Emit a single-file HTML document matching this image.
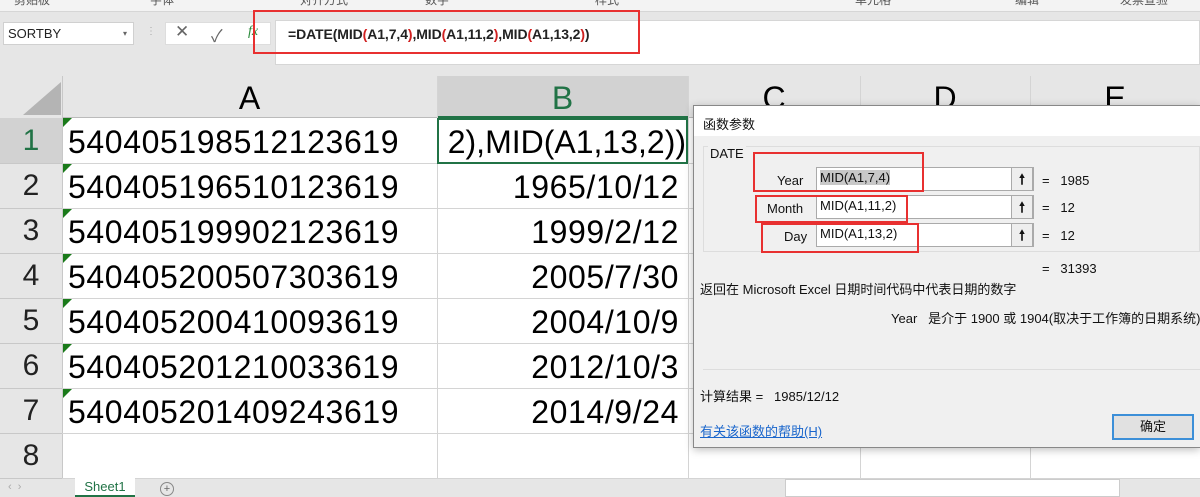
<!DOCTYPE html>
<html><head><meta charset="utf-8"><style>
*{margin:0;padding:0;box-sizing:border-box}
body{width:1200px;height:497px;overflow:hidden;background:#e6e6e6;position:relative;font-family:"Liberation Sans","Noto Sans CJK SC",sans-serif}
.a{position:absolute}
.cell{position:absolute;font-size:32px;color:#000;line-height:45px;white-space:nowrap;letter-spacing:0.6px}
.rh{position:absolute;left:0;width:62px;text-align:center;font-size:30px;color:#222;line-height:45px;border-bottom:1px solid #c8c8c8}
.hl{position:absolute;left:62px;width:1138px;height:1px;background:#d4d4d4}
.tri{position:absolute;width:0;height:0;border-top:9px solid #1a7a1a;border-right:9px solid transparent}
.dlg{font-size:13px;color:#111}
.inp{position:absolute;background:#fff;border:1px solid #aaa;height:24px;font-size:13px;line-height:20px;padding-left:3px}
.btn{position:absolute;right:0;top:-1px;width:22px;height:24px;border:1px solid #aaa;background:#eee;text-align:center;font-size:14px;line-height:22px;font-weight:bold}
.red{position:absolute;border:2px solid #e83030}
</style></head><body>
<div class="a" style="left:0;top:0;width:1200px;height:12px;background:#f3f3f3;border-bottom:1px solid #d6d6d6;font-size:12px;color:#555;line-height:4px;overflow:hidden">
<span class="a" style="left:14px;top:-2px">剪贴板</span><span class="a" style="left:150px;top:-2px">字体</span><span class="a" style="left:300px;top:-2px">对齐方式</span><span class="a" style="left:425px;top:-2px">数字</span><span class="a" style="left:595px;top:-2px">样式</span><span class="a" style="left:855px;top:-2px">单元格</span><span class="a" style="left:1015px;top:-2px">编辑</span><span class="a" style="left:1120px;top:-2px">发票查验</span></div>
<div class="a" style="left:3px;top:22px;width:131px;height:23px;background:#fff;border:1px solid #d0d0d0;font-size:13px;line-height:21px;padding-left:4px;color:#222">SORTBY<span class="a" style="right:6px;top:0;font-size:8px;color:#666">▾</span></div>
<div class="a" style="left:146px;top:26px;color:#aaa;font-size:10px">⋮</div>
<div class="a" style="left:165px;top:22px;width:106px;height:23px;background:#fff;border:1px solid #ddd"></div>
<div class="a" style="left:275px;top:20px;width:925px;height:45px;background:#fff;border:1px solid #d6d6d6"></div>
<span class="a" style="left:175px;top:22px;font-size:17px;color:#666">✕</span>
<span class="a" style="left:211px;top:22px;font-size:17px;color:#666">✓</span>
<span class="a" style="left:248px;top:24px;font-size:14px;color:#2a8a3a;font-style:italic;font-family:'Liberation Serif',serif">fx</span>
<div class="a" style="left:288px;top:26px;font-size:14px;font-weight:bold;color:#222;letter-spacing:-0.1px">=DATE(MID<span style="color:#d02020">(</span>A1,7,4<span style="color:#d02020">)</span>,MID<span style="color:#d02020">(</span>A1,11,2<span style="color:#d02020">)</span>,MID<span style="color:#d02020">(</span>A1,13,2<span style="color:#d02020">)</span>)</div>
<div class="red" style="left:253px;top:10px;width:387px;height:44px"></div>
<div class="a" style="left:62px;top:118px;width:1138px;height:360px;background:#fff"></div>
<div class="a" style="left:62px;top:76px;width:1138px;height:42px;background:#e6e6e6;border-bottom:1px solid #bbb"></div>
<div class="a" style="left:437px;top:76px;width:251px;height:42px;background:#d2d2d2;border-bottom:2px solid #217346"></div>
<div class="a" style="left:0;top:118px;width:62px;height:45px;background:#d2d2d2"></div>
<div class="a" style="left:23px;top:82px;width:0;height:0;border-left:38px solid transparent;border-bottom:33px solid #b4b4b4"></div>
<div class="a" style="left:62px;top:76px;width:1px;height:402px;background:#c8c8c8"></div>
<div class="a" style="left:437px;top:76px;width:1px;height:402px;background:#d4d4d4"></div>
<div class="a" style="left:688px;top:76px;width:1px;height:402px;background:#d4d4d4"></div>
<div class="a" style="left:860px;top:76px;width:1px;height:402px;background:#d4d4d4"></div>
<div class="a" style="left:1030px;top:76px;width:1px;height:402px;background:#d4d4d4"></div>
<div class="a" style="left:62px;top:78px;width:375px;text-align:center;font-size:32px;line-height:40px">A</div>
<div class="a" style="left:437px;top:78px;width:251px;text-align:center;font-size:32px;line-height:40px;color:#217346">B</div>
<div class="a" style="left:688px;top:78px;width:172px;text-align:center;font-size:32px;line-height:40px">C</div>
<div class="a" style="left:860px;top:78px;width:170px;text-align:center;font-size:32px;line-height:40px">D</div>
<div class="a" style="left:1030px;top:78px;width:170px;text-align:center;font-size:32px;line-height:40px">E</div>
<div class="hl" style="top:163px"></div><div class="hl" style="top:208px"></div><div class="hl" style="top:253px"></div><div class="hl" style="top:298px"></div><div class="hl" style="top:343px"></div><div class="hl" style="top:388px"></div><div class="hl" style="top:433px"></div><div class="hl" style="top:478px"></div>
<div class="rh" style="top:118px;color:#217346">1</div><div class="rh" style="top:163px">2</div><div class="rh" style="top:208px">3</div><div class="rh" style="top:253px">4</div><div class="rh" style="top:298px">5</div><div class="rh" style="top:343px">6</div><div class="rh" style="top:388px">7</div><div class="rh" style="top:433px">8</div>
<div class="cell" style="left:68px;top:120px">540405198512123619</div>
<div class="cell" style="left:68px;top:165px">540405196510123619</div>
<div class="cell" style="left:68px;top:210px">540405199902123619</div>
<div class="cell" style="left:68px;top:255px">540405200507303619</div>
<div class="cell" style="left:68px;top:300px">540405200410093619</div>
<div class="cell" style="left:68px;top:345px">540405201210033619</div>
<div class="cell" style="left:68px;top:390px">540405201409243619</div>
<div class="tri" style="left:63px;top:118px"></div><div class="tri" style="left:63px;top:164px"></div><div class="tri" style="left:63px;top:209px"></div><div class="tri" style="left:63px;top:254px"></div><div class="tri" style="left:63px;top:299px"></div><div class="tri" style="left:63px;top:344px"></div><div class="tri" style="left:63px;top:389px"></div>
<div class="a" style="left:437px;top:118px;width:251px;height:46px;border:2px solid #217346;overflow:hidden"><div class="cell" style="right:0;top:0;letter-spacing:0">2),MID(A1,13,2))</div></div>
<div class="cell" style="right:521px;top:165px">1965/10/12</div>
<div class="cell" style="right:521px;top:210px">1999/2/12</div>
<div class="cell" style="right:521px;top:255px">2005/7/30</div>
<div class="cell" style="right:521px;top:300px">2004/10/9</div>
<div class="cell" style="right:521px;top:345px">2012/10/3</div>
<div class="cell" style="right:521px;top:390px">2014/9/24</div>
<div class="a" style="left:0;top:479px;width:1200px;height:18px;background:#e6e6e6"></div>
<div class="a" style="left:8px;top:481px;font-size:11px;color:#aaa">‹ &nbsp;›</div>
<div class="a" style="left:75px;top:478px;width:60px;height:19px;background:#fff;border-bottom:2px solid #217346;font-size:13px;color:#217346;text-align:center;line-height:18px">Sheet1</div>
<div class="a" style="left:160px;top:482px;width:14px;height:14px;border:1px solid #888;border-radius:50%;font-size:11px;text-align:center;line-height:12px;color:#666">+</div>
<div class="a" style="left:785px;top:479px;width:335px;height:18px;background:#fff;border:1px solid #ccc"></div>
<div class="a dlg" style="left:693px;top:105px;width:507px;height:343px;background:#f0f0f0;border:1px solid #888;border-right:none;overflow:hidden;box-shadow:0 2px 8px rgba(0,0,0,.25)">
<div class="a" style="left:0;top:0;width:100%;height:30px;background:#fff"></div>
<div class="a" style="left:9px;top:8px">函数参数</div>
<div class="a" style="left:9px;top:40px;width:497px;height:106px;border:1px solid #ddd"></div>
<div class="a" style="left:14px;top:40px;background:#f0f0f0;padding:0 2px">DATE</div>
<div class="a" style="left:83px;top:67px">Year</div>
<div class="a" style="left:73px;top:95px">Month</div>
<div class="a" style="left:90px;top:123px">Day</div>
<div class="inp" style="left:122px;top:61px;width:218px"><span style="background:#c8c8c8">MID(A1,7,4)</span><div class="btn">🠕</div></div>
<div class="inp" style="left:122px;top:89px;width:218px">MID(A1,11,2)<div class="btn">🠕</div></div>
<div class="inp" style="left:122px;top:117px;width:218px">MID(A1,13,2)<div class="btn">🠕</div></div>
<div class="a" style="left:348px;top:67px">=&nbsp;&nbsp;&nbsp;1985</div>
<div class="a" style="left:348px;top:94px">=&nbsp;&nbsp;&nbsp;12</div>
<div class="a" style="left:348px;top:122px">=&nbsp;&nbsp;&nbsp;12</div>
<div class="a" style="left:348px;top:155px">=&nbsp;&nbsp;&nbsp;31393</div>
<div class="a" style="left:6px;top:173px">返回在 Microsoft Excel 日期时间代码中代表日期的数字</div>
<div class="a" style="left:197px;top:202px;white-space:nowrap">Year&nbsp;&nbsp;&nbsp;是介于 1900 或 1904(取决于工作簿的日期系统)到 9999 之间的数字</div>
<div class="a" style="left:9px;top:263px;width:497px;height:1px;background:#ddd"></div>
<div class="a" style="left:6px;top:280px">计算结果 =&nbsp;&nbsp;&nbsp;1985/12/12</div>
<div class="a" style="left:6px;top:315px;color:#1a66cc;text-decoration:underline">有关该函数的帮助(H)</div>
<div class="a" style="left:418px;top:308px;width:82px;height:26px;background:#e1e1e1;border:2px solid #3c8fd8;text-align:center;line-height:22px">确定</div>
<div class="red" style="left:59px;top:46px;width:171px;height:40px"></div>
<div class="red" style="left:61px;top:89px;width:153px;height:28px"></div>
<div class="red" style="left:67px;top:117px;width:158px;height:30px"></div>
</div>
</body></html>
